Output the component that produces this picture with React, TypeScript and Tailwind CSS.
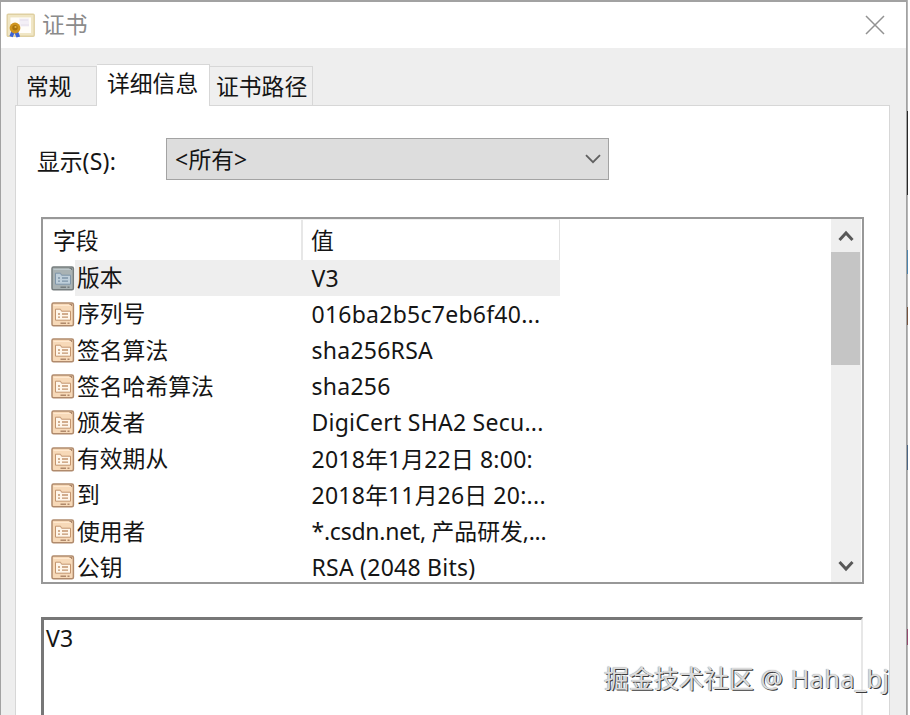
import { useState } from 'react'
import { clsx } from 'clsx'

const TABS = [
  { id: 'general', label: '常规' },
  { id: 'details', label: '详细信息' },
  { id: 'path', label: '证书路径' },
]

const FIELDS = [
  { name: '版本', value: 'V3' },
  { name: '序列号', value: '016ba2b5c7eb6f40...' },
  { name: '签名算法', value: 'sha256RSA' },
  { name: '签名哈希算法', value: 'sha256' },
  { name: '颁发者', value: 'DigiCert SHA2 Secu...' },
  { name: '有效期从', value: '2018年1月22日 8:00:' },
  { name: '到', value: '2018年11月26日 20:...' },
  { name: '使用者', value: '*.csdn.net, 产品研发,...', tight: true },
  { name: '公钥', value: 'RSA (2048 Bits)' },
]

function Mixed({ text, tight }: { text: string; tight?: boolean }) {
  const runs = text.match(/[\u4e00-\u9fff]+|[^\u4e00-\u9fff]+/g) ?? []
  return (
    <>
      {runs.map((r, i) => (
        <span
          key={i}
          className={/[\u4e00-\u9fff]/.test(r) ? 'text-[22.8px]' : clsx('text-[23px]', tight ? 'tracking-[-0.25px]' : 'tracking-[0.25px]')}
        >
          {r}
        </span>
      ))}
    </>
  )
}

function CertIcon() {
  return (
    <svg width="30" height="26" viewBox="0 0 30 26" className="mt-px shrink-0">
      <rect x="1.2" y="1.2" width="27" height="22" rx="1" fill="#f0e6c4" stroke="#dfd0a2" strokeWidth="1.4" />
      <rect x="4" y="4" width="21.5" height="16.5" fill="#fffdf9" stroke="#eee3c0" strokeWidth=".8" />
      <path d="M13 5.5h10v8h-9z" fill="#f3eff6" />
      <path d="M14 7h8M15 12h8" stroke="#e4deea" strokeWidth="1" />
      <path d="M5.5 17.5 3.5 23l3.2 1.2L8.5 20l2 4.4 3.6-1-2.4-6z" fill="#3c64d8" />
      <circle cx="9" cy="15" r="5.4" fill="#cf951f" />
      <circle cx="9" cy="14.8" r="2.7" fill="#a9740f" />
      <circle cx="9.5" cy="14" r="1.1" fill="#e3b544" />
    </svg>
  )
}

function FieldIcon({ selected }: { selected: boolean }) {
  const edge = selected ? '#767d7e' : '#b08a6c'
  const body = selected ? '#a9b2b3' : '#f7d9b8'
  const line = selected ? '#7f95a8' : '#c2946e'
  return (
    <svg width="24" height="25" viewBox="0 0 24 25" className="shrink-0">
      <rect x="1" y="1" width="21.4" height="22.8" rx="1.5" fill={body} stroke={edge} strokeWidth="1.5" />
      <path d="M2.5 3.5h18" stroke={selected ? '#bdc8cc' : '#ffe9d0'} strokeWidth="1" />
      <path d="M4.5 18.2V7.2h5l1 2h9v9z" fill={selected ? '#bfcfda' : '#fff6ea'} stroke={line} strokeWidth="1" />
      <path d="M7 12h2M11 12h6M7 15.2h2M11 15.2h6" stroke={line} strokeWidth="1.3" />
      <path d="M9.5 21.2h5.5M16.5 21.2h2" stroke={edge} strokeWidth="1.4" />
      <path d="M18.5 2.5h2v1.5" stroke={edge} strokeWidth="1.2" fill="none" />
    </svg>
  )
}

export default function App() {
  const [tab, setTab] = useState('details')
  const [selected, setSelected] = useState(0)

  return (
    <div className="relative flex h-[715px] w-[910px] overflow-hidden bg-white font-['Noto_Sans','Noto_Sans_CJK_SC',sans-serif] text-[22.8px] text-[#151515]">
      <div className="flex w-[907px] flex-col border-t-2 border-r border-l border-[#a2a2a2] bg-[#eeeeee]">
        {/* Title bar */}
        <div className="flex h-[46px] shrink-0 items-center bg-white pl-[5px] pr-[21px]">
          <CertIcon />
          <span className="ml-[6px] leading-none text-[#8b8b8b]">证书</span>
          <button className="ml-auto -mt-px" aria-label="Close">
            <svg width="20" height="20" viewBox="0 0 20 20" fill="none" stroke="#929292" strokeWidth="1.5">
              <path d="M1 1l18 18M19 1L1 19" />
            </svg>
          </button>
        </div>

        {/* Tabs */}
        <div className="flex h-[57px] shrink-0 items-end pl-4">
          {TABS.map(t => (
            <button
              key={t.id}
              onClick={() => setTab(t.id)}
              className={clsx(
                'border-t border-r border-[#d7d7d7] text-left leading-none whitespace-nowrap',
                tab === t.id ? 'z-10 -mb-px h-[42px] bg-white pb-[3px]' : 'h-[39px] bg-[#efefef] pt-[3px]',
                t.id === 'general' && 'w-[80px] border-l pl-2',
                t.id === 'details' && 'w-[113px] pl-[10px]',
                t.id === 'path' && 'w-[103px] pl-[6px]',
              )}
            >
              {t.label}
            </button>
          ))}
        </div>

        <div className="ml-[14px] mr-[16px] flex min-h-0 flex-1 flex-col border-x border-t border-[#d7d7d7] bg-white px-[25px]">
          <div className="mt-[32px] flex h-[42px] shrink-0 items-center">
            <label className="-ml-1 w-[127px] pt-[5px] leading-none"><Mixed text="显示(S):" /></label>
            <button className="ml-[2px] flex h-[42px] w-[443px] items-center justify-between border border-[#a3a3a3] bg-[#dddddd] pl-2 pr-[7px] leading-none">
              <span className="pt-[2px]"><Mixed text="<所有>" /></span>
              <svg width="16" height="10" viewBox="0 0 16 10" fill="none" stroke="#606060" strokeWidth="1.8">
                <path d="M1 1.2l7 7 7-7" />
              </svg>
            </button>
          </div>

          {/* Field list */}
          <div className="mt-[37px] flex h-[367px] w-[823px] shrink-0 border-2 border-[#989898]">
            <div className="min-w-0 flex-1 overflow-hidden">
              <div className="flex h-[41px] w-[517px] border-t border-[#efefef]">
                <div className="flex w-[260px] items-center border-r-2 border-[#e7e7e7] pt-[3px] pl-[10px] leading-none">字段</div>
                <div className="flex flex-1 items-center border-r border-[#e2e2e2] pt-[3px] pl-[8px] leading-none">值</div>
              </div>
              {FIELDS.map((f, i) => (
                <div key={f.name} onClick={() => setSelected(i)} className="flex h-[36.2px] w-[517px] items-center">
                  <div className="pl-[8px]"><FieldIcon selected={selected === i} /></div>
                  <div className={clsx('flex h-full flex-1 items-center pt-px pl-[2px] leading-none whitespace-nowrap', selected === i && 'bg-[#eeeeee]')}>
                    <div className="w-[234.5px]">{f.name}</div>
                    <div><Mixed text={f.value} tight={f.tight} /></div>
                  </div>
                </div>
              ))}
            </div>
            <div className="mr-px flex w-[30px] shrink-0 flex-col items-center bg-[#efefef]">
              <div className="flex h-[33px] shrink-0 items-center">
                <svg width="16" height="12" viewBox="0 0 16 12" fill="none" stroke="#585858" strokeWidth="3">
                  <path d="M1.5 10l6.5-7 6.5 7" />
                </svg>
              </div>
              <div className="h-[113px] w-[29px] self-start bg-[#c5c5c5]" />
              <div className="mt-auto flex h-[33px] items-center">
                <svg width="16" height="12" viewBox="0 0 16 12" fill="none" stroke="#585858" strokeWidth="3">
                  <path d="M1.5 2l6.5 7 6.5-7" />
                </svg>
              </div>
            </div>
          </div>

          {/* Value of the selected field */}
          <div className="mt-[33px] min-h-0 w-[822px] flex-1 border-t-[3px] border-r-2 border-l-[3px] border-t-[#777777] border-r-[#e7e7e7] border-l-[#777777] pt-[5px] pl-[2px] leading-[26px]">
            <Mixed text={FIELDS[selected].value} />
          </div>
        </div>
      </div>

      {/* Slivers of the desktop behind the dialog */}
      <div className="flex w-px flex-col bg-[#b5b5b5]">
        <div className="mt-[111px] h-[84px] bg-[#292929]" />
        <div className="mt-[55px] h-[24px] bg-[#4c84ad]" />
        <div className="mt-[33px] h-[18px] bg-[#76543e]" />
        <div className="mt-[120px] h-[25px] bg-[#4c6684]" />
        <div className="mt-[159px] h-[16px] bg-[#944b70]" />
      </div>

      <div className="absolute top-[662px] left-[604px] text-[25px] leading-[32px] whitespace-nowrap text-[#dcdcdc] [text-shadow:1px_1px_0_#3c3c3c,-0.5px_-0.5px_1px_#999]">
        掘金技术社区 <span className="tracking-[0.6px]">@ Haha_bj</span>
      </div>
    </div>
  )
}
